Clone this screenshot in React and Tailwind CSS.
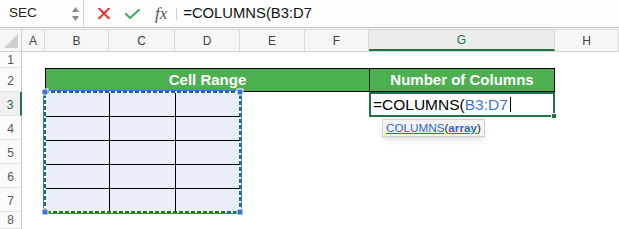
import React from 'react';

const font = { fontFamily: '"Liberation Sans", Arial, sans-serif' };

const columns = [
    { key: 'A', w: 'w-[23px]' },
    { key: 'B', w: 'w-[64px]' },
    { key: 'C', w: 'w-[66px]' },
    { key: 'D', w: 'w-[65px]' },
    { key: 'E', w: 'w-[65px]' },
    { key: 'F', w: 'w-[64px]' },
    { key: 'G', w: 'w-[186px]', active: true },
    { key: 'H', w: 'w-[64px]' },
];

const rows = [
    { n: 1, h: 'h-[16px]' },
    { n: 2, h: 'h-[24px]' },
    { n: 3, h: 'h-[24px]', active: true },
    { n: 4, h: 'h-[24px]' },
    { n: 5, h: 'h-[24px]' },
    { n: 6, h: 'h-[24px]' },
    { n: 7, h: 'h-[24px]' },
    { n: 8, h: 'h-[17px]' },
];

const FormulaBar = () => (
    <div className="flex h-[28px] items-center border-b border-[#c4c4c4] bg-[#fdfdfd]">
        {/* Name box */}
        <div className="flex h-full w-[84px] items-center border-r border-[#d2d2d2] pl-[9px] pr-[4px]">
            <span className="text-[13.5px] text-[#222]">SEC</span>
            <div className="ml-auto flex flex-col gap-[4px]">
                <svg width="7" height="5" viewBox="0 0 7 5"><path d="M3.5 0 L7 5 L0 5 Z" fill="#8c8c8c" /></svg>
                <svg width="7" height="5" viewBox="0 0 7 5"><path d="M0 0 L7 0 L3.5 5 Z" fill="#8c8c8c" /></svg>
            </div>
        </div>
        {/* Cancel */}
        <svg className="ml-[14px]" width="12" height="11" viewBox="0 0 12 11">
            <path d="M1 0.5 L11 10.5 M11 0.5 L1 10.5" stroke="#e2403d" strokeWidth="2.2" strokeLinecap="round" />
        </svg>
        {/* Enter */}
        <svg className="ml-[15px]" width="15" height="10" viewBox="0 0 15 10">
            <path d="M1 5 L5 9 L14 1" stroke="#46ad62" strokeWidth="2.2" fill="none" strokeLinecap="round" strokeLinejoin="round" />
        </svg>
        <span
            className="ml-[15px] text-[17px] italic leading-none text-[#555]"
            style={{ fontFamily: '"Liberation Serif", "Times New Roman", serif' }}
        >
            fx
        </span>
        <div className="ml-[9px] h-[12px] w-px bg-[#cfcfcf]" />
        <span className="ml-[6px] text-[14.8px] text-[#111]">=COLUMNS(B3:D7</span>
    </div>
);

const ColumnHeaders = () => (
    <div className="mt-px flex h-[23px] border-y border-[#d4d4d4] bg-[#f6f6f6]">
        <div className="relative w-[22px] border-r border-[#cfcfcf]">
            <svg className="absolute bottom-[3px] right-[3px]" width="14" height="14" viewBox="0 0 14 14">
                <path d="M14 0 L14 14 L0 14 Z" fill="#cdcdcd" />
            </svg>
        </div>
        {columns.map((c) => (
            <div
                key={c.key}
                className={`${c.w} flex shrink-0 items-center justify-center border-r border-[#dadada] text-[12px] ${
                    c.active ? 'border-b-2 border-b-[#217346] bg-[#ececec] text-[#217346]' : 'text-[#444]'
                }`}
            >
                {c.key}
            </div>
        ))}
    </div>
);

const RowHeaders = () => (
    <div className="flex w-[22px] shrink-0 flex-col">
        {rows.map((r) => (
            <div
                key={r.n}
                className={`${r.h} flex items-center justify-center border-b border-[#e2e2e2] text-[12px] ${
                    r.n > 1 && r.n < 8 ? 'pt-[3px]' : ''
                } ${
                    r.active
                        ? 'border-r-2 border-r-[#217346] bg-[#f0f0f0] text-[#217346]'
                        : 'border-r border-r-[#cacaca] bg-[#fbfbfb] text-[#555]'
                }`}
            >
                {r.n}
            </div>
        ))}
    </div>
);

const DataRange = () => (
    <div className="relative col-span-3 col-start-2 row-span-5 row-start-3">
        <div className="grid h-full grid-cols-[64px_66px_65px] grid-rows-[24px_24px_24px_24px_24px]">
            {[0, 1, 2, 3, 4].map((r) =>
                [0, 1, 2].map((c) => (
                    <div
                        key={`${r}-${c}`}
                        className={`bg-[#e9eef9] ${c > 0 ? 'border-l border-black' : ''} ${r > 0 ? 'border-t border-black' : ''}`}
                    />
                ))
            )}
        </div>
        {/* copy selection marquee */}
        <svg className="absolute left-0 top-0 overflow-visible" width="195" height="120" viewBox="0 0 195 120">
            <rect x="-1.5" y="-1.5" width="198" height="123" fill="none" stroke="#3a74d4" strokeWidth="1" />
            <rect x="0" y="0" width="195" height="120" fill="none" stroke="#ffffff" strokeWidth="2" />
            <rect x="0" y="0" width="195" height="120" fill="none" stroke="#217346" strokeWidth="2" strokeDasharray="4 2" />
            {[[0, 0], [195, 0], [0, 120], [195, 120]].map(([x, y]) => (
                <rect key={`${x}-${y}`} x={x - 3} y={y - 3} width="6" height="6" fill="#3a74d4" stroke="#ffffff" strokeWidth="1" />
            ))}
        </svg>
    </div>
);

export default function App() {
    return (
        <div className="h-[229px] w-[619px] overflow-hidden bg-white" style={font}>
            <FormulaBar />
            <ColumnHeaders />
            <div className="flex">
                <RowHeaders />
                <div className="grid grid-cols-[23px_64px_66px_65px_65px_64px_186px_64px] grid-rows-[16px_24px_24px_24px_24px_24px_24px_17px]">
                    {/* Header row */}
                    <div className="col-span-5 col-start-2 row-start-2 flex items-center justify-center border-y border-l border-black bg-[#4caf50] text-[15px] font-bold text-white">
                        Cell Range
                    </div>
                    <div className="col-start-7 row-start-2 flex items-center justify-center border border-black bg-[#4caf50] text-[15px] font-bold text-white">
                        Number of Columns
                    </div>

                    <DataRange />

                    {/* Active cell G3 */}
                    <div className="relative col-start-7 row-start-3 -mb-px flex items-center border-2 border-[#217346] bg-white pl-[2px] text-[15.5px] text-black">
                        <span>=COLUMNS(</span>
                        <span className="text-[#3b76d4]">B3:D7</span>
                        <span className="ml-[2px] h-[15px] w-px bg-black" />
                        <div className="absolute -bottom-[4px] -right-[4px] h-[6px] w-[6px] border border-white bg-[#217346]" />
                        {/* function tooltip */}
                        <div className="absolute left-[11px] top-[25px] flex h-[18px] items-center whitespace-nowrap border border-[#d0d0d0] bg-[#f4f4f4] px-[3px] text-[11.7px] shadow-md">
                            <span className="text-[#2a67d2] underline">COLUMNS</span>
                            <span className="text-[#222]">(</span>
                            <span className="font-bold text-[#2a67d2] underline">array</span>
                            <span className="text-[#222]">)</span>
                        </div>
                    </div>
                </div>
            </div>
        </div>
    );
}
